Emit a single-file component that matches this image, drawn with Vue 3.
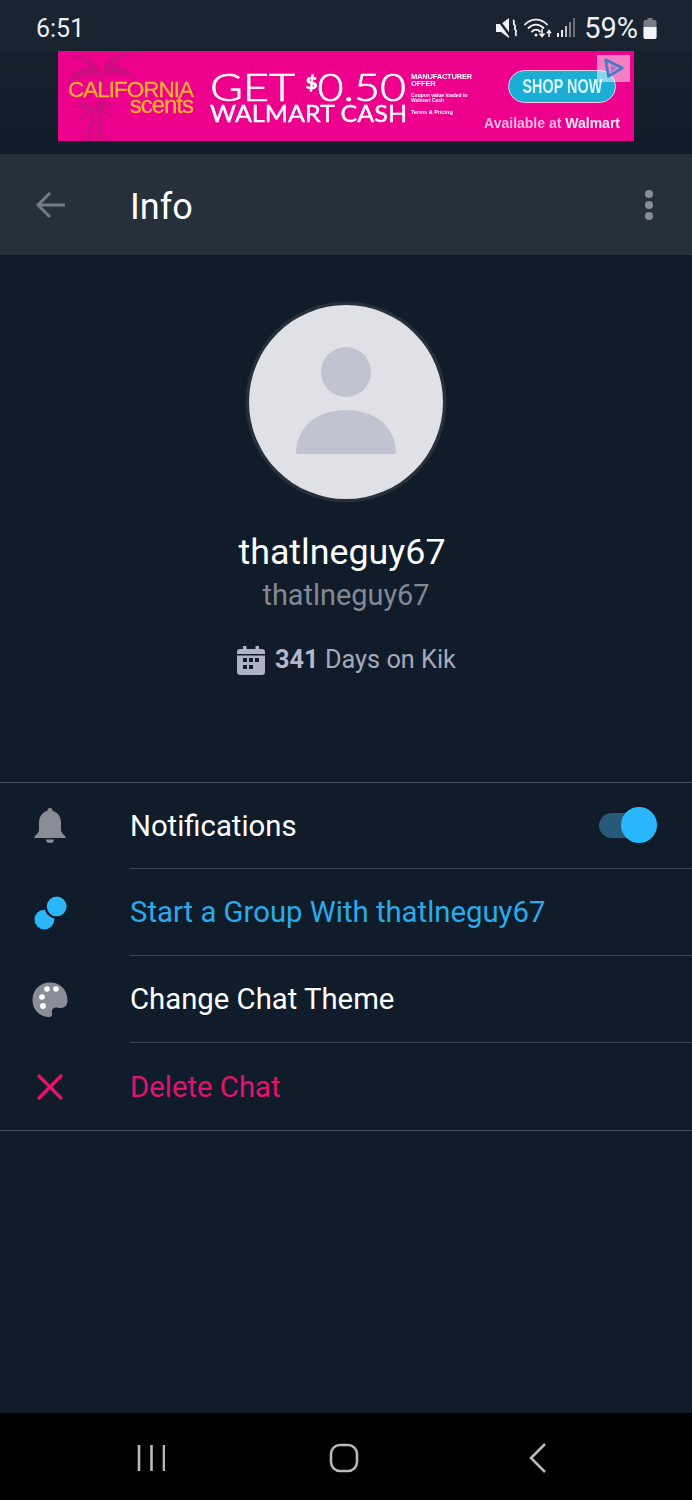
<template>
  <div class="screen">
    <div class="status">
      <span class="status__time">6:51</span>
      <div class="status__icons">
        <svg class="ic-mute" width="24" height="22" viewBox="0 0 24 22">
          <path d="M1 7h5l8 -6v20l-8 -6H1z" fill="#f1f3f6" />
          <path d="M2 1l14 19" stroke="#1a2330" stroke-width="2.4" />
          <path d="M18 3c3 2 -1 3 1.500 5s-1.500 3 1 5s-2 3 1 6" fill="none" stroke="#f1f3f6" stroke-width="1.800" />
        </svg>
        <svg class="ic-wifi" width="28" height="22" viewBox="0 0 28 22">
          <g fill="none" stroke="#f1f3f6" stroke-width="1.800" stroke-linecap="round">
            <path d="M1 7.500C7 1 17 1 23 7.500" />
            <path d="M4.500 11C9 6.500 15 6.500 19.500 11" />
            <path d="M8 14.500c2.500 -2.500 5.500 -2.500 8 0" />
          </g>
          <circle cx="12" cy="18" r="1.500" fill="#f1f3f6" />
          <path d="M18 12v7m-2.500 -2.500l2.500 3l2.500 -3" fill="none" stroke="#f1f3f6" stroke-width="1.500" />
          <path d="M25 20v-6m-2 2.200l2 -2.700l2 2.700" fill="none" stroke="#f1f3f6" stroke-width="1.500" />
        </svg>
        <svg class="ic-signal" width="19" height="20" viewBox="0 0 19 20">
          <rect x="0" y="15" width="2" height="4" fill="#eef0f3" />
          <rect x="4" y="12" width="2" height="7" fill="#eef0f3" />
          <rect x="8" y="8" width="2" height="11" fill="#b9bdc4" />
          <rect x="12" y="4" width="2" height="15" fill="#7c828b" />
          <rect x="16" y="0" width="2" height="19" fill="#6a7078" />
        </svg>
        <span class="status__pct">59%</span>
        <svg class="ic-batt" width="14" height="21" viewBox="0 0 14 21">
          <path d="M4.500 0h5v2h2a2 2 0 0 1 2 2v15a2 2 0 0 1 -2 2h-9a2 2 0 0 1 -2 -2v-15a2 2 0 0 1 2 -2h2z" fill="#777d86" />
          <path d="M0.500 9h13v10a2 2 0 0 1 -2 2h-9a2 2 0 0 1 -2 -2z" fill="#f2f3f5" />
        </svg>
      </div>
    </div>

    <div class="ad-band">
      <div class="ad">
        <svg class="ad__palm" width="78" height="90" viewBox="0 0 100 90" preserveAspectRatio="none">
          <g fill="#cf0c80">
            <path d="M42 90c1 -20 2 -50 5 -66l4 0c-3 16 -3 46 -1 66z" />
            <path d="M49 24C40 8 26 2 8 6c10 1 20 5 28 12C26 15 12 18 4 32c12 -6 28 -8 45 -8z" />
            <path d="M49 24C54 8 66 0 88 4c-12 0 -22 5 -26 11c10 -2 24 3 30 14c-13 -6 -28 -7 -43 -5z" />
            <path d="M30 90c1 -12 4 -24 8 -32l3 1c-3 8 -5 20 -5 31z" />
            <path d="M40 58c-8 -8 -18 -8 -26 -2c8 0 14 2 18 5c-8 0 -14 5 -16 12c7 -6 15 -10 24 -15z" />
            <path d="M40 58c6 -8 18 -10 28 -3c-8 0 -14 1 -18 4c8 1 14 6 16 13c-7 -7 -16 -11 -26 -14z" />
          </g>
        </svg>
        <div class="ad__brand">
          <span class="ad__cal">CALIFORNIA</span>
          <span class="ad__scents">scents</span>
        </div>
        <div class="ad__offer">
          <div class="ad__get">GET <sup>$</sup>0.50</div>
          <div class="ad__cash">WALMART CASH</div>
        </div>
        <div class="ad__fine">
          <span class="ad__fine-head">MANUFACTURER OFFER</span>
          <span class="ad__fine-body">Coupon value loaded to Walmart Cash</span>
          <span class="ad__fine-foot">Terms &amp; Pricing</span>
        </div>
        <div class="ad__cta">
          <span class="ad__btn"><span>SHOP NOW</span></span>
          <span class="ad__avail">Available at <b>Walmart</b></span>
        </div>
        <div class="ad__choice">
          <svg width="24" height="24" viewBox="0 0 26 26">
            <path d="M4 3l18 9l-15 9z" fill="none" stroke="#3d7fc4" stroke-width="3" stroke-linejoin="round" />
            <path d="M10 9l6 3l-6 4z" fill="#3d7fc4" opacity=".6" />
          </svg>
        </div>
      </div>
    </div>

    <header class="bar">
      <svg class="bar__back" width="32" height="30" viewBox="0 0 32 30">
        <path d="M30 15H4M15 3L3 15l12 12" fill="none" stroke="#737986" stroke-width="3" />
      </svg>
      <h1 class="bar__title">Info</h1>
      <div class="bar__more"><i></i><i></i><i></i></div>
    </header>

    <section class="profile">
      <div class="avatar">
        <svg width="194" height="194" viewBox="0 0 194 194">
          <circle cx="97" cy="67" r="25" fill="#c1c3d0" />
          <path d="M47 149c0 -28 22 -44 50 -44s50 16 50 44z" fill="#c1c3d0" />
        </svg>
      </div>
      <div class="profile__name">thatlneguy67</div>
      <div class="profile__user">thatlneguy67</div>
      <div class="profile__days">
        <svg width="30" height="30" viewBox="0 0 30 30">
          <path fill="#aeb2c8" d="M7 1h3.500v3h9V1H23v3h3a3 3 0 0 1 3 3v20a3 3 0 0 1 -3 3H4a3 3 0 0 1 -3 -3V7a3 3 0 0 1 3 -3h3z" />
          <rect x="1" y="9" width="28" height="1.500" fill="#111c2a" />
          <g fill="#111c2a">
            <rect x="7" y="13" width="4" height="4" /><rect x="13" y="13" width="4" height="4" /><rect x="19" y="13" width="4" height="4" />
            <rect x="7" y="20" width="4" height="4" /><rect x="13" y="20" width="4" height="4" />
          </g>
        </svg>
        <span><b>341</b> Days on Kik</span>
      </div>
    </section>

    <ul class="menu">
      <li v-for="item in items" :key="item.label" class="menu__row" :class="item.tone">
        <span class="menu__icon">
          <svg v-if="item.icon === 'bell'" width="32" height="36" viewBox="0 0 32 36">
            <path d="M16 0a2.500 2.500 0 0 1 2.500 2.800C24 4.200 27 9 27 15v7c0 2.500 2 4 4.500 6.500V30H.5v-1.500C3 26 5 24.500 5 22v-7C5 9 8 4.200 13.500 2.800A2.500 2.500 0 0 1 16 0z" fill="#8a8d98" />
            <path d="M12 31.500h8a4 3.500 0 0 1 -8 0z" fill="#8a8d98" />
          </svg>
          <svg v-else-if="item.icon === 'group'" class="menu__group" width="34" height="34" viewBox="0 0 36 36">
            <circle cx="11" cy="25" r="10.500" fill="#29b6fb" />
            <circle cx="24" cy="11" r="13" fill="#111c2a" />
            <circle cx="24" cy="11" r="10.500" fill="#29b6fb" />
          </svg>
          <svg v-else-if="item.icon === 'palette'" width="36" height="36" viewBox="0 0 36 36">
            <path d="M18 0.500C8 0.500 0.500 8 0.500 18S8 35 17 35c3 0 3.500 -2 3 -4c-.7 -3 1 -5.500 4 -5.500c1.500 0 3 .5 5 .5c4 0 6.500 -3 6.500 -7.500C35.500 7.500 28 .5 18 .5z" fill="#8a8d98" />
            <circle cx="15" cy="7" r="2.800" fill="#fff" />
            <circle cx="24" cy="7" r="2.800" fill="#fff" />
            <circle cx="10" cy="15" r="2.800" fill="#fff" />
            <circle cx="11" cy="24" r="3" fill="#fff" />
          </svg>
          <svg v-else width="28" height="28" viewBox="0 0 28 28">
            <path d="M3 3l22 22M25 3L3 25" fill="none" stroke="#eb0f6e" stroke-width="3.200" stroke-linecap="round" />
          </svg>
        </span>
        <span class="menu__body">
          <span class="menu__label">{{ item.label }}</span>
          <span v-if="item.toggle" class="toggle"><i></i></span>
        </span>
      </li>
    </ul>

    <div class="spacer"></div>

    <nav class="nav">
      <svg width="28" height="28" viewBox="0 0 28 28">
        <path d="M2 1v26M14.500 1v26M27 1v26" stroke="#b9b9b9" stroke-width="2.600" />
      </svg>
      <svg class="nav__home" width="30" height="30" viewBox="0 0 30 30">
        <rect x="2" y="2" width="26" height="26" rx="9" fill="none" stroke="#b9b9b9" stroke-width="2.600" />
      </svg>
      <svg width="20" height="30" viewBox="0 0 20 30">
        <path d="M17 1L3 15l14 14" fill="none" stroke="#b9b9b9" stroke-width="2.600" />
      </svg>
    </nav>
  </div>
</template>

<script setup>
const items = [
  { label: "Notifications", icon: "bell", toggle: true },
  { label: "Start a Group With thatlneguy67", icon: "group", tone: "is-blue" },
  { label: "Change Chat Theme", icon: "palette" },
  { label: "Delete Chat", icon: "close", tone: "is-red" }
]
</script>

<style scoped>
.screen {
  display:flex;
  flex-direction:column;
  width:692px;
  height:1500px;
  overflow:hidden;
  color:#fff;
  background:#111c2a;
  font-family:Roboto, "Liberation Sans", sans-serif;
}

.status {
  display:flex;
  box-sizing:border-box;
  height:51px;
  flex:none;
  align-items:center;
  justify-content:space-between;
  padding:0 35px 0 36px;
  background:#1a2330;
}
.status__time { margin-top:6px; color:#eceef1; font-size:25px; }
.status__icons { display:flex; align-items:center; margin-top:5px; }
.status__pct { margin-left:8px; color:#eceef1; font-size:29px; }
.ic-mute { margin-right:5px; }
.ic-signal { margin-left:5px; }
.ic-batt { margin-left:5px; }

.ad-band {
  display:flex;
  height:103px;
  flex:none;
  justify-content:center;
  background:linear-gradient(#18212e, #111c2a);
}
.ad {
  position:relative;
  display:flex;
  width:576px;
  height:90px;
  overflow:hidden;
  background:#ec008c;
  filter:blur(.5px);
}
.ad__palm { position:absolute; top:0; left:6px; }
.ad__brand {
  position:relative;
  display:flex;
  width:125px;
  flex:none;
  flex-direction:column;
  align-items:flex-end;
  margin:28px 0 0 10px;
  color:#fdb22b;
  font-family:"Liberation Sans", sans-serif;
}
.ad__cal { font-size:22.500px; line-height:21px; letter-spacing:-1px; -webkit-text-stroke:.3px #fdb22b; }
.ad__scents { margin-top:-3px; font-size:24px; line-height:16px; letter-spacing:-1px; -webkit-text-stroke:.3px #fdb22b; }
.ad__offer { width:195px; flex:none; margin:18px 0 0 17px; font-family:Lato, sans-serif; }
.ad__get {
  width:166px;
  font-size:38px;
  font-weight:300;
  line-height:34px;
  white-space:nowrap;
  transform:scaleX(1.18);
  transform-origin:0 50%;
  -webkit-text-stroke:.7px #fff;
}
.ad__get sup { font-size:17px; font-weight:700; line-height:0; vertical-align:12px; }
.ad__cash {
  width:180px;
  font-size:23px;
  line-height:20px;
  white-space:nowrap;
  transform:scaleX(1.09);
  transform-origin:0 50%;
  -webkit-text-stroke:.4px #fff;
}
.ad__fine {
  display:flex;
  width:60px;
  flex:none;
  flex-direction:column;
  margin:22px 0 0 6px;
  font-family:"Liberation Sans", sans-serif;
  font-weight:700;
}
.ad__fine-head { font-size:7.500px; line-height:7px; letter-spacing:-.2px; }
.ad__fine-body { margin-top:6px; font-size:5px; line-height:5px; }
.ad__fine-foot { margin-top:6px; font-size:5.500px; line-height:6px; white-space:nowrap; }
.ad__cta {
  display:flex;
  width:137px;
  flex:none;
  flex-direction:column;
  align-items:flex-end;
  margin:19px 0 0 12px;
}
.ad__btn {
  display:flex;
  box-sizing:border-box;
  width:108px;
  height:33px;
  align-items:center;
  justify-content:center;
  margin-right:4px;
  border:1.500px solid #f6c8e4;
  border-radius:17px;
  color:#d9f5ff;
  background:#1aaed4;
  font-family:"Liberation Sans", sans-serif;
  font-size:20px;
  font-weight:700;
}
.ad__btn span { display:inline-block; white-space:nowrap; transform:scaleX(.72); }
.ad__avail { margin-top:11px; color:#f8b8dd; font-family:"Liberation Sans", sans-serif; font-size:14px; font-weight:700; line-height:18px; white-space:nowrap; }
.ad__avail b { color:#fde6f3; }
.ad__choice {
  position:absolute;
  top:4px;
  right:4px;
  display:flex;
  width:33px;
  height:27px;
  align-items:center;
  justify-content:center;
  background:rgba(255,255,255,.5);
}

.bar {
  display:flex;
  box-sizing:border-box;
  height:101px;
  flex:none;
  align-items:center;
  padding:0 34px 0 35px;
  background:#26303a;
}
.bar__back { flex:none; }
.bar__title { margin:4px 0 0 63px; font-size:36px; font-weight:400; }
.bar__more { display:flex; flex-direction:column; gap:3px; margin-left:auto; margin-right:5px; }
.bar__more i { width:8px; height:8px; border-radius:50%; background:#8a8d98; }

.profile { display:flex; flex:none; flex-direction:column; align-items:center; }
.avatar {
  display:flex;
  width:194px;
  height:194px;
  align-items:center;
  justify-content:center;
  margin-top:50px;
  border-radius:50%;
  background:#e0e1e7;
  box-shadow:0 0 0 3.500px #262f3a;
}
.profile__name { margin:33px 8px 0 0; font-size:35.800px; line-height:40px; }
.profile__user { margin-top:5px; color:#838893; font-size:28.900px; line-height:36px; }
.profile__days { display:flex; align-items:center; gap:9px; margin-top:32px; color:#a5a9b8; font-size:25.300px; line-height:30px; }
.profile__days b { color:#b4b8ca; font-weight:700; }

.menu {
  flex:none;
  margin:107px 0 0;
  padding:0;
  border-top:1px solid #4a515c;
  border-bottom:1px solid #4a515c;
  list-style:none;
}
.menu__row { display:flex; height:87px; }
.menu__row:first-child { height:86px; }
.menu__icon {
  display:flex;
  box-sizing:border-box;
  width:130px;
  flex:none;
  align-items:center;
  justify-content:center;
  padding-right:30px;
}
.menu__group { margin-left:2px; }
.menu__body {
  display:flex;
  flex:1;
  align-items:center;
  justify-content:space-between;
  padding-right:35px;
  border-bottom:1px solid #3a424e;
}
.menu__row:last-child .menu__body { border-bottom:0; }
.menu__label { font-size:29.300px; }
.is-blue .menu__label { color:#29abeb; }
.is-red .menu__label { color:#e4126d; }

.toggle { position:relative; display:block; width:58px; height:25px; border-radius:13px; background:#275a78; }
.toggle i {
  position:absolute;
  top:-6px;
  right:0;
  width:36px;
  height:36px;
  border-radius:50%;
  background:#29b6fb;
}

.spacer { flex:1; }

.nav {
  display:flex;
  box-sizing:border-box;
  height:87px;
  flex:none;
  align-items:center;
  justify-content:space-between;
  padding:3px 144px 0 137px;
  background:#000;
}
.nav__home { margin-right:5px; }
</style>
